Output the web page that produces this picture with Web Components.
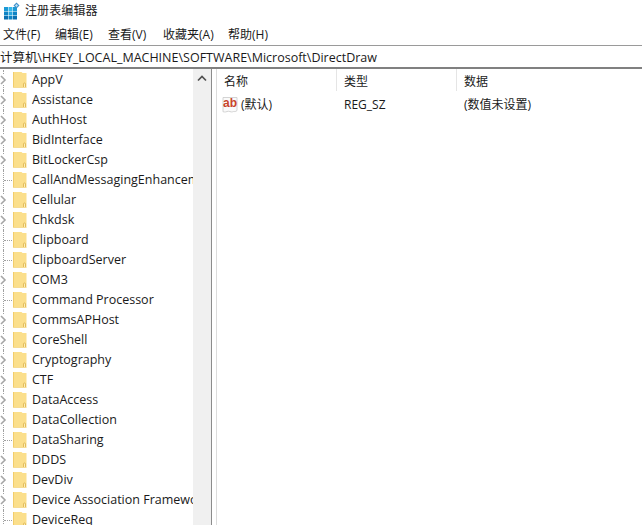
<!DOCTYPE html>
<html lang="zh"><head><meta charset="utf-8"><title>注册表编辑器</title>
<style>
html,body{margin:0;padding:0;background:#fff;height:100%;overflow:hidden}
body{font:13px/20px "Open Sans","Noto Sans CJK SC",sans-serif;color:#1a1a1a}
</style></head><body>
<reg-app></reg-app>
<script>
function def(name, html, init){
  customElements.define(name, class extends HTMLElement{
    constructor(){super();this.attachShadow({mode:'open'}).innerHTML=html;}
    connectedCallback(){ if(init) init.call(this,this.shadowRoot); }
  });
}
const FONT='"Open Sans","Noto Sans CJK SC",sans-serif';
def('reg-titlebar',`<style>
:host{display:flex;align-items:center;height:19px;padding:1px 0 0 2px;box-sizing:content-box;gap:5px;font:12px/19px ${FONT};color:#222;letter-spacing:.1px}
svg{display:block;flex:none}
</style>
<svg width="18" height="18" viewBox="0 0 18 18">
<rect x="2" y="5" width="4" height="4" fill="#1b9ad6"/><rect x="6.5" y="5" width="4" height="4" fill="#37b6ea"/><rect x="11" y="5" width="4" height="4" fill="#1b9ad6"/>
<rect x="2" y="9.500" width="4" height="4" fill="#0f83c4"/><rect x="6.500" y="9.500" width="4" height="4" fill="#27a5de"/><rect x="11" y="9.500" width="4" height="4" fill="#0f83c4"/>
<rect x="2" y="14" width="4" height="3.500" fill="#0a6fb0"/><rect x="6.500" y="14" width="4" height="3.500" fill="#0f83c4"/><rect x="11" y="14" width="4" height="3.500" fill="#0a6fb0"/>
<path d="M14.500 .5l3 3-3 3-3-3z" fill="#3f8fc9"/><path d="M14.500 2l1.500 1.500-1.500 1.500-1.500-1.500z" fill="#bfe4f7"/>
</svg><slot></slot>`);
def('reg-menubar',`<style>
:host{display:flex;height:26px;align-items:center;font:12px/20px ${FONT};color:#1a1a1a;box-sizing:border-box;padding:5px 0 0 3px;border-bottom:1px solid #9a9a9a}
::slotted(span){display:block;flex:none}
</style><slot></slot>`);
def('reg-address',`<style>
:host{display:block;box-sizing:border-box;font:12.500px/21px ${FONT};color:#1a1a1a;border-bottom:2px solid #808080;white-space:nowrap;overflow:hidden;height:23px;line-height:23px}
</style><slot></slot>`);
const folder=`<svg width="14" height="16" viewBox="0 0 14 16"><path d="M0 0h8.500l1 1H13.500V15.500H0z" fill="#fbdf8c"/><path d="M0 0h.8V15.500H0zM0 15h13.500v.6H0z" fill="#f0c964"/><path d="M10.500 15V12a1 1 0 0 1 2 0v3" fill="#fdeeb8" stroke="#dcb24a" stroke-width=".8"/></svg>`;
def('reg-key',`<style>
:host{display:flex;align-items:center;height:20px;position:relative;white-space:nowrap;font:12.500px/20px ${FONT};color:#1a1a1a}
.g{width:13px;flex:none;height:20px;position:relative}
.v{position:absolute;left:3px;top:0;bottom:0;border-left:1px dotted #a0a0a0}
.h{position:absolute;left:4px;top:10px;width:8px;border-top:1px dotted #a0a0a0}
.c{position:absolute;left:-1px;top:5px}
.f{display:block;flex:none;margin-right:5px;height:16px}
.t{flex:none;line-height:20px;height:20px}
</style><span class="g"><span class="v"></span><span class="h"></span></span><span class="f">${folder}</span><span class="t"><slot></slot></span>`,
function(r){
  const g=r.querySelector('.g');
  if(!this.hasAttribute('leaf')){
    g.querySelector('.h').remove();
    g.insertAdjacentHTML('beforeend','<svg class="c" width="8" height="10" viewBox="0 0 8 10"><rect x="-1" y="0" width="9" height="10" fill="#fff"/><path d="M2 1l4 4-4 4" fill="none" stroke="#a6a6a6" stroke-width="1.600"/></svg>');
  }
});
def('reg-scroll',`<style>
:host{display:block;width:18px;flex:none;background:#f0f0f0;position:relative}
svg{position:absolute;left:4px;top:6px}
</style><svg width="10" height="7" viewBox="0 0 10 7"><path d="M1 5.500l4-4 4 4" fill="none" stroke="#505050" stroke-width="1.700"/></svg>`);
def('reg-tree',`<style>
:host{display:flex;width:211px;flex:none;height:100%;overflow:hidden}
.l{width:193px;flex:none;overflow:hidden;padding-top:1px;box-sizing:border-box}
</style><div class="l"><slot></slot></div><reg-scroll></reg-scroll>`);
def('reg-list',`<style>
:host{display:block;flex:1;min-width:0;font:12px/20px ${FONT};color:#1a1a1a}
.h{display:grid;grid-template-columns:120px 120px 1fr;height:26px;align-items:start}
.h span{padding-left:7px;border-right:1px solid #e5e5e5;height:22px;line-height:26px;box-sizing:border-box}
.h span:last-child{border:0}
.r{display:grid;grid-template-columns:120px 120px 1fr;height:20px;align-items:center}
.n{display:flex;align-items:center;gap:3px;padding-left:5px}
.n svg{flex:none}
.c{padding-left:7px}
</style>
<div class="h"><span>名称</span><span>类型</span><span>数据</span></div>
<div class="r"><span class="n"><svg width="16" height="18" viewBox="0 0 16 18"><path d="M1 1.500h14v13c-1.500 1.800-3 .5-4.500 1.300S7 14.500 5 15.500s-3 .2-4 .3z" fill="#fafafa" stroke="#c9c9c9" stroke-width=".8"/><text x="1" y="11" font-family="Liberation Sans,sans-serif" font-size="12" font-weight="700" fill="#c8442c">ab</text></svg>(默认)</span><span class="c">REG_SZ</span><span class="c">(数值未设置)</span></div>`);
def('reg-app',`<style>
:host{display:flex;flex-direction:column;width:642px;height:525px;overflow:hidden;background:#fff}
.m{display:flex;flex:1;min-height:0}
.s{flex:none;border-left:1px solid #8c8c8c;border-right:1px solid #dcdcdc;width:4px;background:#fff}
</style>
<reg-titlebar>注册表编辑器</reg-titlebar>
<reg-menubar><span style="width:52px">文件(F)</span><span style="width:53px">编辑(E)</span><span style="width:55px">查看(V)</span><span style="width:65px">收藏夹(A)</span><span>帮助(H)</span></reg-menubar>
<reg-address>计算机\\HKEY_LOCAL_MACHINE\\SOFTWARE\\Microsoft\\DirectDraw</reg-address>
<div class="m"><reg-tree id="t"></reg-tree><div class="s"></div><reg-list></reg-list></div>`,
function(r){
  const t=r.getElementById('t');
  if(t.children.length) return;
  const items=[['AppV'],['Assistance'],['AuthHost'],['BidInterface'],['BitLockerCsp'],['CallAndMessagingEnhancement',1],['Cellular'],['Chkdsk'],['Clipboard',1],['ClipboardServer',1],['COM3'],['Command Processor',1],['CommsAPHost'],['CoreShell'],['Cryptography'],['CTF'],['DataAccess'],['DataCollection'],['DataSharing',1],['DDDS'],['DevDiv'],['Device Association Framework'],['DeviceReq',1]];
  for(const [n,l] of items){const k=document.createElement('reg-key');if(l)k.setAttribute('leaf','');k.textContent=n;t.appendChild(k);}
});
</script>
</body></html>
